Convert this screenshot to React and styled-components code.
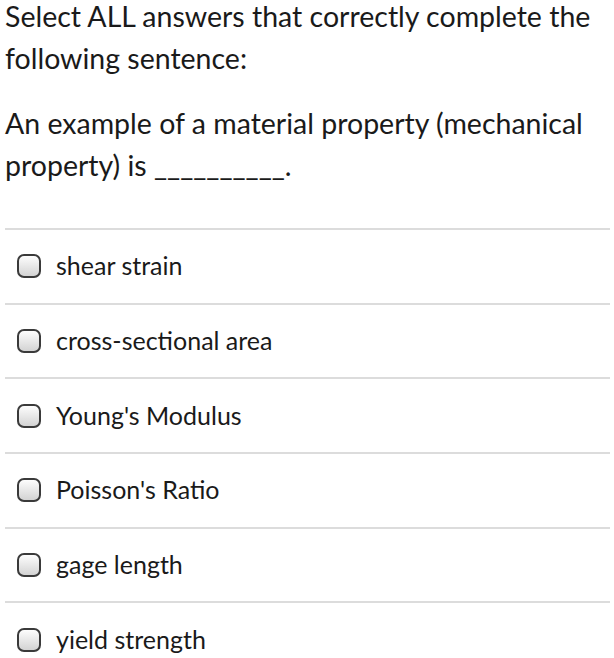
import React from "react";
import styled, { createGlobalStyle } from "styled-components";

const Global = createGlobalStyle`
  html, body { margin: 0; padding: 0; background: #fff; }
  body { font-family: Lato, "Noto Sans", sans-serif; color: #1a1a1a; }
`;

const Page = styled.div`
  width: 614px;
  padding: 0 4px 0 5px;
  box-sizing: border-box;
`;

const Question = styled.p`
  margin: ${(p) => (p.$first ? "-5px" : "23px")} 0 0;
  font-size: 28.5px;
  line-height: 42px;
`;

const Options = styled.ul`
  list-style: none;
  margin: 42px 0 0;
  padding: 0;
`;

const Option = styled.li`
  display: flex;
  align-items: center;
  gap: 15px;
  height: 74.7px;
  padding: 0 0 2px 12px;
  box-sizing: border-box;
  border-top: 2px solid #dcdcdc;
  font-size: 25px;
`;

const Box = styled.span`
  width: 20px;
  height: 20px;
  margin-top: 2px;
  border: 2px solid #3a3a3a;
  border-radius: 7px;
  background: linear-gradient(#fdfdfd, #d3d3d3);
  flex: none;
`;

const items = [
  "shear strain",
  "cross-sectional area",
  "Young's Modulus",
  "Poisson's Ratio",
  "gage length",
  "yield strength",
];

export default function App() {
  return (
    <Page>
      <Global />
      <Question $first>Select ALL answers that correctly complete the following sentence:</Question>
      <Question>An example of a material property (mechanical property) is __________.</Question>
      <Options>
        {items.map((t) => (
          <Option key={t}>
            <Box />
            <span>{t}</span>
          </Option>
        ))}
      </Options>
    </Page>
  );
}
